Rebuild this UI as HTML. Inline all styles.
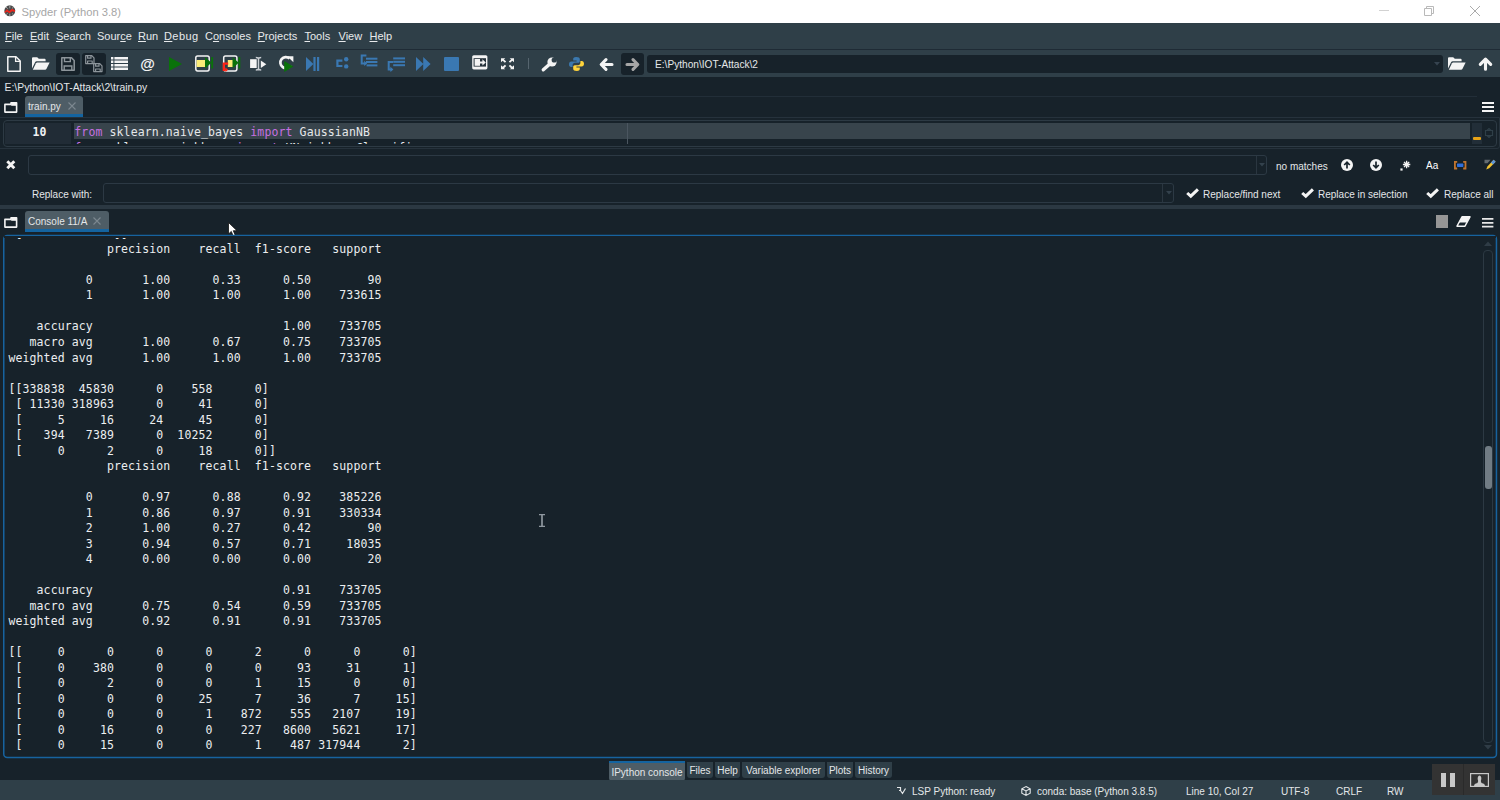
<!DOCTYPE html>
<html><head><meta charset="utf-8"><title>Spyder (Python 3.8)</title>
<style>
*{box-sizing:border-box;margin:0;padding:0}
html,body{width:1500px;height:800px;overflow:hidden;background:#17222a}
body{position:relative;font-family:"Liberation Sans",sans-serif;font-size:11px;color:#e4e7e9}
.abs{position:absolute}
#title{left:0;top:0;width:1500px;height:23px;background:#fff}
#title .t{left:21.500px;top:5.500px;font-size:11.200px;color:#a6a6a6;white-space:nowrap}
#menu{left:0;top:23px;width:1500px;height:26px;background:#2f3f48}
#menu span{position:absolute;top:7px;font-size:11px;color:#e8eaec;white-space:nowrap}
#menu u{text-decoration:underline;text-underline-offset:1px}
#tool{left:0;top:49px;width:1500px;height:28px;background:#2f3f48;border-top:1px solid #1f2b35}
#pathline{left:4.500px;top:82px;font-size:10.400px;color:#e4e7e9;white-space:nowrap}
.tab{background:#4e5d66;border-bottom:3px solid #1464a0;border-radius:3px 3px 0 0;color:#e4e7e9;white-space:nowrap}
.inp{border:1px solid #2c3944;border-radius:3px;background:#17222a}
pre{font-family:"Liberation Mono",monospace}
#con{left:4px;top:236px;width:1492px;height:521px;overflow:hidden}
#con pre{position:absolute;left:4.400px;top:5.900px;font-family:"DejaVu Sans Mono","Liberation Mono",monospace;font-size:11.500px;letter-spacing:.117px;line-height:15.520px;color:#eceef0;white-space:pre}
#status{left:0;top:780px;width:1500px;height:20px;background:#2f3f48}
#status span{position:absolute;top:5.600px;font-size:10px;color:#e4e7e9;white-space:nowrap}
.btab{position:absolute;top:760px;height:21px;background:#2f3f48;border-radius:0 0 3px 3px;font-size:10px;color:#e4e7e9;padding:5px 0 0 0;text-align:center;white-space:nowrap}

svg{position:absolute;overflow:visible}
.dbox{position:absolute;background:#17222a;border-radius:3px}
.lbl{position:absolute;font-size:10px;color:#e4e7e9;white-space:nowrap}
.edt{font-family:"DejaVu Sans Mono","Liberation Mono",monospace;font-size:11.500px;letter-spacing:.117px;line-height:16px;white-space:pre}
</style></head><body>
<div id="title" class="abs">
<svg style="left:3.800px;top:5px" width="11.600" height="11.600" viewBox="0 0 14 14"><circle cx="7" cy="7" r="6.600" fill="#4a4a4a"/><path d="M.6 8.200L3.600 5.200L6.400 7.400L9.400 4.600L13.400 6.200L13.200 8.600L9.800 7.400L6.600 10L3.600 8L1 9.800Z" fill="#e8261c"/><path d="M7 .6V4M7 10.400V13.400M2.400 2.400L4.600 4.400M11.600 2.400L9.600 4.200M2.600 11.600L4.400 10M11.400 11.600L9.800 10.200" stroke="#d8d8d8" stroke-width=".8" fill="none"/></svg>
<span class="abs t">Spyder (Python 3.8)</span>
<svg style="left:1379px;top:10px" width="10" height="1"><rect width="10" height="1" fill="#d2d2d2"/></svg>
<svg style="left:1424px;top:6px" width="10" height="10" viewBox="0 0 10 10"><path d="M.5 2.5h7v7h-7z M2.5 2.5v-2h7v7h-2" fill="none" stroke="#b9b9b9" stroke-width="1"/></svg>
<svg style="left:1470px;top:6px" width="10" height="10" viewBox="0 0 10 10"><path d="M0 0L10 10M10 0L0 10" stroke="#a2a2a2" stroke-width=".9"/></svg>
</div>
<div id="menu" class="abs">
<span style="left:5px"><u>F</u>ile</span><span style="left:30px"><u>E</u>dit</span><span style="left:56px"><u>S</u>earch</span><span style="left:97px">Sour<u>c</u>e</span><span style="left:138px"><u>R</u>un</span><span style="left:164px;letter-spacing:.4px"><u>D</u>ebug</span><span style="left:205px">C<u>o</u>nsoles</span><span style="left:257.500px"><u>P</u>rojects</span><span style="left:304.500px"><u>T</u>ools</span><span style="left:338.500px"><u>V</u>iew</span><span style="left:369.500px"><u>H</u>elp</span>
</div>
<div id="tool" class="abs"></div>
<!-- toolbar icons -->
<div class="dbox" style="left:56.400px;top:52.800px;width:23.600px;height:22.600px"></div>
<div class="dbox" style="left:82.200px;top:52.800px;width:23.600px;height:22.600px"></div>
<div class="dbox" style="left:620.500px;top:52.800px;width:23.700px;height:22.600px"></div>
<svg id="i-new" style="left:7px;top:56px" width="14" height="16" viewBox="0 0 14 16"><path d="M.8 .8H9L13.2 5V15.2H.8Z" fill="none" stroke="#f4f4f4" stroke-width="1.5" stroke-linejoin="round"/><path d="M8.6 .8V5.4H13.2" fill="none" stroke="#f4f4f4" stroke-width="1.3"/></svg>
<svg id="i-open" style="left:32px;top:57px" width="18" height="13" viewBox="0 0 18 13"><path d="M0 11.5V1.2Q0 .2 1 .2H5.2L6.8 1.8H12.6Q13.6 1.8 13.6 2.8V4.2H4.6Q3.6 4.2 3.1 5.2Z" fill="#f4f4f4"/><path d="M.8 12.8L4 6.2Q4.4 5.4 5.3 5.4H17.6L14.4 12Q14 12.8 13.1 12.8Z" fill="#f4f4f4"/></svg>
<svg id="i-save" style="left:61px;top:57px" width="14" height="14" viewBox="0 0 14 14"><path d="M1 .8H10.5L13.2 3.5V13.2H.8V.8Z" fill="none" stroke="#8d959b" stroke-width="1.5" stroke-linejoin="round"/><path d="M3.5 1V4.6H9.3V1M3.2 13V9H10.8V13" fill="none" stroke="#8d959b" stroke-width="1.4"/></svg>
<svg id="i-saveall" style="left:85px;top:55px" width="18" height="18" viewBox="0 0 18 18"><g fill="none" stroke="#8d959b" stroke-width="1.2" stroke-linejoin="round"><path d="M.7 .7H6.8L9 2.9V8.6H.7Z"/><path d="M2.6 .9V3.2H6V.9M2.6 8.4V6H7.2V8.4"/><path d="M8.7 8.7H14.8L17 10.9V16.6H8.7Z"/><path d="M10.6 8.9V11.2H14V8.9M10.6 16.4V14H15.2V16.4"/></g></svg>
<svg id="i-list" style="left:111px;top:57px" width="17" height="13" viewBox="0 0 17 13"><g fill="#f4f4f4"><rect x="0" y="0" width="2.4" height="2.5"/><rect x="3.4" y="0" width="13.6" height="2.5"/><rect x="0" y="3.5" width="2.4" height="2.5"/><rect x="3.4" y="3.5" width="13.6" height="2.5"/><rect x="0" y="7" width="2.4" height="2.5"/><rect x="3.4" y="7" width="13.6" height="2.5"/><rect x="0" y="10.5" width="2.4" height="2.5"/><rect x="3.4" y="10.5" width="13.6" height="2.5"/></g></svg>
<span id="i-at" class="abs" style="left:140.300px;top:54.500px;font-size:15px;line-height:18px;color:#f4f4f4;font-weight:bold">@</span>
<svg id="i-run" style="left:169px;top:57px" width="13" height="14" viewBox="0 0 13 14"><path d="M0 0L13 7L0 14Z" fill="#0a720a"/></svg>
<svg id="i-cell" style="left:195px;top:54.500px" width="19" height="17" viewBox="0 0 19 17"><rect x=".8" y=".9" width="13.400" height="15" rx="1.800" fill="none" stroke="#f4f4f4" stroke-width="1.500"/><rect x="1.600" y="5" width="8.600" height="7" fill="#fbec78"/><path d="M10 2.100L16.400 7.800L10 13.500Z" fill="#0a720a"/><rect x="16.200" y="2.100" width="1.900" height="11.400" fill="#0a720a"/></svg>
<svg id="i-celladv" style="left:222px;top:54.500px" width="19" height="18" viewBox="0 0 19 18"><rect x="1.700" y=".9" width="13.200" height="15" rx="1.800" fill="none" stroke="#f4f4f4" stroke-width="1.500"/><rect x="5.800" y="5" width="5" height="7" fill="#fbec78"/><path d="M10.600 2.100L16.600 7.800L10.600 13.500Z" fill="#0a720a"/><rect x="16.400" y="2.100" width="1.900" height="11.400" fill="#0a720a"/><path d="M6.200 8.600H1.800V14.800H3.600" fill="none" stroke="#ff2314" stroke-width="2.200"/><path d="M3.400 12.600L6.200 14.800L3.400 17Z" fill="#ff2314"/></svg>
<svg id="i-sel" style="left:249px;top:56px" width="18" height="15" viewBox="0 0 18 15"><rect x="1.100" y="3.200" width="6.600" height="8.800" fill="#f4f4f4"/><path d="M9.500 1.200V14.400M6.800 1.600Q9.500 1.600 9.500 3Q9.500 1.600 12.200 1.600M6.800 14Q9.500 14 9.500 12.600Q9.500 14 12.200 14" stroke="#c9ced3" stroke-width="1.500" fill="none"/><path d="M11.800 4.400L17.300 8.200L11.800 12Z" fill="#f4f4f4"/></svg>
<svg id="i-rerun" style="left:278px;top:55px" width="16" height="17" viewBox="0 0 16 17"><path d="M11.600 3.600A5.500 5.500 0 1 0 12.600 10.400" fill="none" stroke="#f4f4f4" stroke-width="2.700"/><path d="M9.200 1.200H15.400V7.200Z" fill="#f4f4f4"/><path d="M6.200 6L15.400 11.500L6.200 17Z" fill="#0a720a"/></svg>
<svg id="i-debug" style="left:306px;top:57px" width="14" height="14" viewBox="0 0 14 14"><path d="M0 0L7.4 7L0 14Z" fill="#3a78b2"/><rect x="7.4" y="0" width="2.2" height="14" fill="#3a78b2"/><rect x="11" y="0" width="2.2" height="14" fill="#3a78b2"/></svg>
<svg id="i-step" style="left:335.500px;top:57px" width="13" height="12" viewBox="0 0 13 12"><path d="M6.400 3.600H1.400V9H6.400" fill="none" stroke="#3a78b2" stroke-width="2.200"/><circle cx="10.200" cy="2.200" r="2.200" fill="#3a78b2"/><circle cx="10.200" cy="9.400" r="2.200" fill="#3a78b2"/></svg>
<svg id="i-into" style="left:360px;top:54px" width="18" height="14" viewBox="0 0 18 14"><path d="M6.400 1.400H1.700V9.400H5" fill="none" stroke="#3a78b2" stroke-width="2"/><path d="M4.200 6.800L7.200 9.400L4.200 12Z" fill="#3a78b2"/><rect x="6" y="3.700" width="11.400" height="2" fill="#3a78b2"/><rect x="6" y="7" width="11.400" height="2" fill="#3a78b2"/><rect x="6.600" y="10.400" width="10.800" height="2" fill="#3a78b2"/></svg>
<svg id="i-ret" style="left:387px;top:57px" width="19" height="15" viewBox="0 0 19 15"><rect x="6.200" y=".4" width="11.800" height="2" fill="#3a78b2"/><rect x="6.200" y="3.800" width="11.800" height="2" fill="#3a78b2"/><rect x="6.200" y="7.200" width="11.800" height="2" fill="#3a78b2"/><path d="M6 5H1.700V12.400H4" fill="none" stroke="#3a78b2" stroke-width="2"/><path d="M3.400 9.800L6.400 12.400L3.400 15Z" fill="#3a78b2"/></svg>
<svg id="i-cont" style="left:416px;top:57px" width="15" height="14" viewBox="0 0 15 14"><path d="M0 0L7.4 7L0 14Z M7.2 0L14.6 7L7.2 14Z" fill="#3a78b2"/></svg>
<svg id="i-stop" style="left:444px;top:57px" width="15" height="14" viewBox="0 0 15 14"><rect width="15" height="14" rx="1" fill="#3a78b2"/></svg>
<svg id="i-max" style="left:472px;top:55px" width="16" height="15" viewBox="0 0 16 15"><rect x=".2" y=".2" width="15.2" height="14.2" rx="1.6" fill="#f4f4f4"/><rect x="1.6" y="3.2" width="12.4" height="8.4" fill="#26323b"/><rect x="2.6" y="4" width="5.4" height="6.8" fill="#f4f4f4"/><path d="M8 6.4H10.4V4.2L13.8 7.4L10.4 10.6V8.4H8Z" fill="#f4f4f4"/></svg>
<svg id="i-full" style="left:500.800px;top:58.200px" width="13" height="11.600" viewBox="0 0 14 12"><g fill="#f4f4f4"><path d="M0 0H4.6L3.2 1.3L5.6 3.6L4.2 4.9L1.8 2.7L0 4.4Z"/><path d="M14 0H9.4L10.8 1.3L8.4 3.6L9.8 4.9L12.2 2.7L14 4.4Z"/><path d="M0 12H4.6L3.2 10.7L5.6 8.4L4.2 7.1L1.8 9.3L0 7.6Z"/><path d="M14 12H9.4L10.8 10.7L8.4 8.4L9.8 7.1L12.2 9.3L14 7.6Z"/></g></svg>
<div class="abs" style="left:528px;top:58px;width:1px;height:11px;background:#56656f"></div>
<svg id="i-wrench" style="left:541px;top:57px" width="16" height="15" viewBox="0 0 16 15"><path d="M2.300 12.800L9.400 6.400" stroke="#f4f4f4" stroke-width="3.400" stroke-linecap="round" fill="none"/><circle cx="11" cy="5" r="4.600" fill="#f4f4f4"/><circle cx="13.200" cy="3" r="2.600" fill="#2f3f48"/><path d="M13.200 3L17 -1V3Z" fill="#2f3f48"/></svg>
<svg id="i-py" style="left:569px;top:57px" width="15" height="14" viewBox="0 0 15 14"><path d="M7.2 0C4.6 0 4.2 1 4.2 2.2V3.6H7.6V4.4H2.4C.8 4.4 0 5.6 0 7.2C0 8.9.8 10 2.2 10H3.6V8.2C3.6 6.8 4.6 5.8 6 5.8H9.2C10.3 5.8 10.8 5 10.8 4V2.2C10.8 .8 9.6 0 7.2 0Z" fill="#3b78ae"/><path d="M7.8 14C10.4 14 10.8 13 10.8 11.8V10.4H7.4V9.6H12.6C14.2 9.6 15 8.4 15 6.8C15 5.100 14.2 4 12.8 4H11.400V5.800C11.4 7.2 10.4 8.2 9 8.2H5.800C4.700 8.2 4.200 9 4.200 10V11.800C4.200 13.200 5.400 14 7.800 14Z" fill="#ffd43b"/></svg>
<svg id="i-back" style="left:598.500px;top:58.200px" width="15" height="13" viewBox="0 0 15 13"><path d="M13 6.500H3M7 1.700L2.200 6.500L7 11.300" fill="none" stroke="#f4f4f4" stroke-width="3.100" stroke-linecap="round" stroke-linejoin="round"/></svg>
<svg id="i-fwd" style="left:624.500px;top:58.200px" width="15" height="13" viewBox="0 0 15 13"><path d="M2 6.500H12M8 1.700L12.800 6.500L8 11.300" fill="none" stroke="#a6a6a6" stroke-width="3.100" stroke-linecap="round" stroke-linejoin="round"/></svg>
<div class="abs" id="cwd" style="left:647px;top:55px;width:796px;height:18px;background:#17222a;border-radius:3px"><span class="abs" style="left:8px;top:3.800px;font-size:10.150px;color:#e4e7e9;white-space:nowrap">E:\Python\IOT-Attack\2</span><svg style="left:787px;top:7px" width="6" height="4" viewBox="0 0 6 4"><path d="M0 0H6L3 3.500Z" fill="#364450"/></svg></div>
<svg id="i-open2" style="left:1448px;top:57px" width="18" height="13" viewBox="0 0 18 13"><path d="M0 11.500V1.200Q0 .2 1 .2H5.200L6.800 1.800H12.600Q13.600 1.800 13.600 2.800V4.200H4.600Q3.600 4.200 3.100 5.200Z" fill="#f4f4f4"/><path d="M.8 12.800L4 6.200Q4.400 5.400 5.300 5.400H17.600L14.400 12Q14 12.800 13.100 12.800Z" fill="#f4f4f4"/></svg>
<svg id="i-up" style="left:1477.500px;top:57.300px" width="15" height="14" viewBox="0 0 15 14"><path d="M7.500 12.200V3M2.300 7.400L7.500 2.200L12.700 7.400" fill="none" stroke="#f4f4f4" stroke-width="3.100" stroke-linecap="round" stroke-linejoin="round"/></svg>

<div id="pathline" class="abs">E:\Python\IOT-Attack\2\train.py</div>

<!-- editor tab bar -->
<svg style="left:4px;top:101.5px" width="13.500" height="11" viewBox="0 0 13.500 11"><path d="M.9 2.400H7V.9H12.600V10.100H.9Z" fill="none" stroke="#f4f4f4" stroke-width="1.600" stroke-linejoin="round"/><path d="M7.200 .9H12.600V3.800H7.200Z" fill="#f4f4f4"/></svg>
<div class="abs tab" style="left:25px;top:96px;width:58px;height:21px"><span class="abs" style="left:3px;top:4.700px;font-size:10px">train.py</span><svg style="left:43px;top:6px" width="8" height="8" viewBox="0 0 8 8"><path d="M.5 .5L7.500 7.500M7.500 .5L.5 7.500" stroke="#7c8890" stroke-width="1.100"/></svg></div>
<div class="abs" style="left:84px;top:96px;width:1393px;height:1px;background:#222e38"></div>
<svg style="left:1482px;top:102px" width="12" height="10" viewBox="0 0 12 10"><path d="M0 1H12M0 5H12M0 9H12" stroke="#f4f4f4" stroke-width="2"/></svg>
<!-- editor -->
<div class="abs" style="left:-2px;top:117px;width:1501.500px;height:32px;border:1px solid #26323c;border-radius:0 0 3px 0"></div>
<div class="abs" id="ed" style="left:3px;top:120px;width:1494px;height:26.500px;border:1px solid #2d3a44;border-radius:4px"></div>
<div class="abs" id="edin" style="left:5px;top:123px;width:1491px;height:20.500px;overflow:hidden">
 <div class="abs" style="left:0;top:0;width:66px;height:21px;background:#212c36"></div>
 <div class="abs" style="left:69px;top:0;width:1396px;height:15.700px;background:#38444c"></div>
 <div class="abs" style="left:622px;top:0;width:1px;height:21px;background:#4b5660"></div>
 <div class="abs" style="left:1467px;top:0;width:9.500px;height:21px;background:#222e38"></div>
 <div class="abs" style="left:1468.200px;top:14.200px;width:7.400px;height:2.600px;border-radius:1px;background:#e8a317"></div>
 <pre class="abs edt" style="left:27.400px;top:.7px;font-weight:bold;color:#f0f2f4">10</pre>
 <pre class="abs edt" style="left:69.300px;top:.7px;color:#e6e8ea"><span style="color:#c670e0">from</span> sklearn.naive_bayes <span style="color:#c670e0">import</span> GaussianNB
<span style="color:#c670e0">from</span> sklearn.neighbors <span style="color:#c670e0">import</span> KNeighborsClassifier</pre>
 <svg style="left:1478.600px;top:4.400px" width="10" height="12" viewBox="0 0 10 12"><path d="M1.500 3.500H8.500V8.500H1.500Z M3 3.500L5 1.500L7 3.500 M3 8.500L5 10.500L7 8.500" fill="none" stroke="#2f3f48" stroke-width="1.200"/></svg>
</div>
<!-- find/replace -->
<svg style="left:6.200px;top:160px" width="9.600" height="9.600" viewBox="0 0 9.600 9.600"><path d="M1.300 1.300L8.300 8.300M8.300 1.300L1.300 8.300" stroke="#f4f4f4" stroke-width="2.900"/></svg>
<div class="abs inp" style="left:28px;top:155px;width:1239px;height:20px"><div class="abs" style="left:1227px;top:0;width:1px;height:18px;background:#2a3640"></div><svg style="left:1230px;top:7px" width="6" height="4" viewBox="0 0 6 4"><path d="M0 0H6L3 3.500Z" fill="#33414c"/></svg></div>
<span class="lbl" style="left:1276px;top:160.500px">no matches</span>
<svg style="left:1341px;top:159px" width="12" height="12" viewBox="0 0 12 12"><circle cx="6" cy="6" r="6" fill="#f4f4f4"/><path d="M6 9.600V3.600M3.200 6L6 3.200L8.800 6" fill="none" stroke="#17222a" stroke-width="1.700"/></svg>
<svg style="left:1370px;top:159px" width="12" height="12" viewBox="0 0 12 12"><circle cx="6" cy="6" r="6" fill="#f4f4f4"/><path d="M6 2.400V8.400M3.200 6L6 8.800L8.800 6" fill="none" stroke="#17222a" stroke-width="1.700"/></svg>
<svg style="left:1399.500px;top:159.800px" width="12" height="12" viewBox="0 0 12 12"><path d="M6.600 .8V8.200M2.900 4.500H10.300M4 1.900L9.200 7.100M9.200 1.900L4 7.100" stroke="#f4f4f4" stroke-width="1.300"/><circle cx="6.600" cy="4.500" r="2" fill="#f4f4f4"/><rect x=".4" y="8.400" width="2.200" height="2.200" fill="#f4f4f4"/></svg>
<span class="lbl" style="left:1426px;top:160px;font-size:10px;color:#fff">Aa</span>
<svg style="left:1454px;top:160.600px" width="12.400" height="8.400" viewBox="0 0 12.400 8.400"><path d="M3.200 .9H.9V7.500H3.200M9.200 .9H11.500V7.500H9.200" fill="none" stroke="#c27530" stroke-width="1.800"/><rect x="3" y="2.500" width="6.400" height="3.400" rx=".6" fill="#2f6fdc"/></svg>
<svg style="left:1483.500px;top:159px" width="12" height="12" viewBox="0 0 12 12"><path d="M.5 .8H6.500L3.500 4.200H.5Z" fill="#626a70"/><path d="M9.600 .8L11.600 2.800L5.200 9.200L2.200 10.400L3.400 7.400Z" fill="#f2c230"/><path d="M9.600 .8L11.600 2.800L9 5.400L7 3.400Z" fill="#5b94dc"/></svg>
<span class="lbl" style="left:32px;top:189px">Replace with:</span>
<div class="abs inp" style="left:103px;top:183px;width:1071px;height:20px"><div class="abs" style="left:1058px;top:0;width:1px;height:18px;background:#2a3640"></div><svg style="left:1062px;top:7px" width="6" height="4" viewBox="0 0 6 4"><path d="M0 0H6L3 3.500Z" fill="#33414c"/></svg></div>
<svg class="chk" style="left:1186px;top:188px" width="13" height="10" viewBox="0 0 13 10"><path d="M1.200 5L4.800 8.200L11.900 1.400" fill="none" stroke="#f4f4f4" stroke-width="3"/></svg>
<span class="lbl" style="left:1203px;top:189px">Replace/find next</span>
<svg class="chk" style="left:1301px;top:188px" width="13" height="10" viewBox="0 0 13 10"><path d="M1.200 5L4.800 8.200L11.900 1.400" fill="none" stroke="#f4f4f4" stroke-width="3"/></svg>
<span class="lbl" style="left:1318px;top:189px">Replace in selection</span>
<svg class="chk" style="left:1426px;top:188px" width="13" height="10" viewBox="0 0 13 10"><path d="M1.200 5L4.800 8.200L11.900 1.400" fill="none" stroke="#f4f4f4" stroke-width="3"/></svg>
<span class="lbl" style="left:1444px;top:189px">Replace all</span>
<div class="abs" style="left:0;top:205.300px;width:1500px;height:4px;background:#2b3842"></div>
<!-- console tab bar -->
<svg style="left:4px;top:216.6px" width="13.500" height="11" viewBox="0 0 13.500 11"><path d="M.9 2.400H7V.9H12.600V10.100H.9Z" fill="none" stroke="#f4f4f4" stroke-width="1.600" stroke-linejoin="round"/><path d="M7.200 .9H12.600V3.800H7.200Z" fill="#f4f4f4"/></svg>
<div class="abs tab" style="left:25px;top:211px;width:84px;height:21px"><span class="abs" style="left:3px;top:4.500px;font-size:10px">Console 11/A</span><svg style="left:68px;top:6px" width="8" height="8" viewBox="0 0 8 8"><path d="M.5 .5L7.500 7.500M7.500 .5L.5 7.500" stroke="#7c8890" stroke-width="1.100"/></svg></div>
<div class="abs" style="left:1436px;top:215.400px;width:12.300px;height:12.300px;background:#969696"></div>
<svg style="left:1456.400px;top:216.300px" width="15" height="11" viewBox="0 0 15 11"><path d="M6 .8H14L9 10.200H1Z" fill="none" stroke="#f4f4f4" stroke-width="1.400" stroke-linejoin="round"/><path d="M6 .8H14L10.800 6.600H2.900Z" fill="#f4f4f4"/></svg>
<svg style="left:1482px;top:217.700px" width="11.400" height="9.600" viewBox="0 0 11.400 9.600"><path d="M0 .9H11.400M0 4.800H11.400M0 8.700H11.400" stroke="#e8e8e8" stroke-width="1.800"/></svg>
<svg style="left:228px;top:222px" width="10" height="15" viewBox="0 0 10 15"><path d="M.5 .5V12L3.300 9.400L5.200 14L7.200 13.200L5.300 8.700H9Z" fill="#fff" stroke="#111" stroke-width=".8"/></svg>
<svg style="left:0;top:0" width="1500" height="800"><rect x="3.750" y="235.400" width="1492.700" height="522" rx="3.500" fill="none" stroke="#17639f" stroke-width="1.500"/></svg>
<div id="con" class="abs"><div class="abs" style="left:0;top:0;width:1492px;height:2.300px;background:#17222a;z-index:2"></div><pre style="top:-8.600px;height:15.520px;overflow:hidden"> [     0 733615]]</pre><pre>              precision    recall  f1-score   support

           0       1.00      0.33      0.50        90
           1       1.00      1.00      1.00    733615

    accuracy                           1.00    733705
   macro avg       1.00      0.67      0.75    733705
weighted avg       1.00      1.00      1.00    733705

[[338838  45830      0    558      0]
 [ 11330 318963      0     41      0]
 [     5     16     24     45      0]
 [   394   7389      0  10252      0]
 [     0      2      0     18      0]]
              precision    recall  f1-score   support

           0       0.97      0.88      0.92    385226
           1       0.86      0.97      0.91    330334
           2       1.00      0.27      0.42        90
           3       0.94      0.57      0.71     18035
           4       0.00      0.00      0.00        20

    accuracy                           0.91    733705
   macro avg       0.75      0.54      0.59    733705
weighted avg       0.92      0.91      0.91    733705

[[     0      0      0      0      2      0      0      0]
 [     0    380      0      0      0     93     31      1]
 [     0      2      0      0      1     15      0      0]
 [     0      0      0     25      7     36      7     15]
 [     0      0      0      1    872    555   2107     19]
 [     0     16      0      0    227   8600   5621     17]
 [     0     15      0      0      1    487 317944      2]</pre></div>

<div class="abs" style="left:1483px;top:250px;width:10px;height:493px;border:1px solid #2c3943;border-radius:4px"></div>
<div class="abs" style="left:1485px;top:446px;width:7px;height:43px;background:#717c84;border-radius:3px"></div>
<svg style="left:1484px;top:241px" width="8" height="5" viewBox="0 0 8 5"><path d="M0 5L4 .5L8 5Z" fill="#2f3c46"/></svg>
<svg style="left:1484px;top:745px" width="8" height="5" viewBox="0 0 8 5"><path d="M0 0L4 4.500L8 0Z" fill="#2f3c46"/></svg>
<svg style="left:538.800px;top:514px" width="6" height="13" viewBox="0 0 6 13"><path d="M0 .7H6M0 12.300H6" stroke="#8f989f" stroke-width="1.300"/><path d="M3 .7V12.300" stroke="#8f989f" stroke-width="1.700"/></svg>
<div class="btab" style="left:609px;width:76px;top:761px;height:19.500px;background:#4e5d66;border-top:2px solid #1464a0;padding-top:4px">IPython console</div>
<div class="btab" style="left:687px;width:26px;top:762.400px;height:15.400px;padding-top:2.800px">Files</div>
<div class="btab" style="left:715px;width:25px;top:762.400px;height:15.400px;padding-top:2.800px">Help</div>
<div class="btab" style="left:742px;width:83px;top:762.400px;height:15.400px;padding-top:2.800px">Variable explorer</div>
<div class="btab" style="left:827px;width:26px;top:762.400px;height:15.400px;padding-top:2.800px">Plots</div>
<div class="btab" style="left:855px;width:37px;top:762.400px;height:15.400px;padding-top:2.800px">History</div>
<div id="status" class="abs">
<svg style="left:896px;top:6px" width="10" height="10" viewBox="0 0 10 10"><path d="M1 1.500H4.500V4.500H3M4.500 4.500L6.500 7.500L9.500 2.500" fill="none" stroke="#e4e7e9" stroke-width="1.200"/></svg>
<span style="left:912px">LSP Python: ready</span>
<svg style="left:1021px;top:6px" width="10" height="10" viewBox="0 0 10 10"><path d="M5 .6L9.200 2.800V7.200L5 9.400L.8 7.200V2.800Z M.8 2.800L5 5L9.200 2.800M5 5V9.400" fill="none" stroke="#e4e7e9" stroke-width="1.100"/></svg>
<span style="left:1037px">conda: base (Python 3.8.5)</span>
<span style="left:1186px">Line 10, Col 27</span>
<span style="left:1281px">UTF-8</span>
<span style="left:1336px">CRLF</span>
<span style="left:1387px">RW</span>
</div>
<div class="abs" style="left:1432px;top:764px;width:63px;height:31px;background:#333">
<div class="abs" style="left:31px;top:0;width:1px;height:31px;background:#2a2a2a"></div>
<div class="abs" style="left:9px;top:9px;width:5px;height:14px;background:#c8c8c8"></div>
<div class="abs" style="left:18px;top:9px;width:5px;height:14px;background:#c8c8c8"></div>
<svg style="left:38px;top:9px" width="19" height="14" viewBox="0 0 19 14"><rect x=".6" y=".6" width="17.800" height="12.800" fill="none" stroke="#c8c8c8" stroke-width="1.200"/><path d="M4 13.400Q4 10.500 7.500 10L8.200 8Q7.300 6 7.800 4.200Q8.300 2.600 9.500 2.600Q10.700 2.600 11.200 4.200Q11.700 6 10.800 8L11.500 10Q15 10.500 15 13.400Z" fill="#c8c8c8"/></svg>
</div>

</body></html>
